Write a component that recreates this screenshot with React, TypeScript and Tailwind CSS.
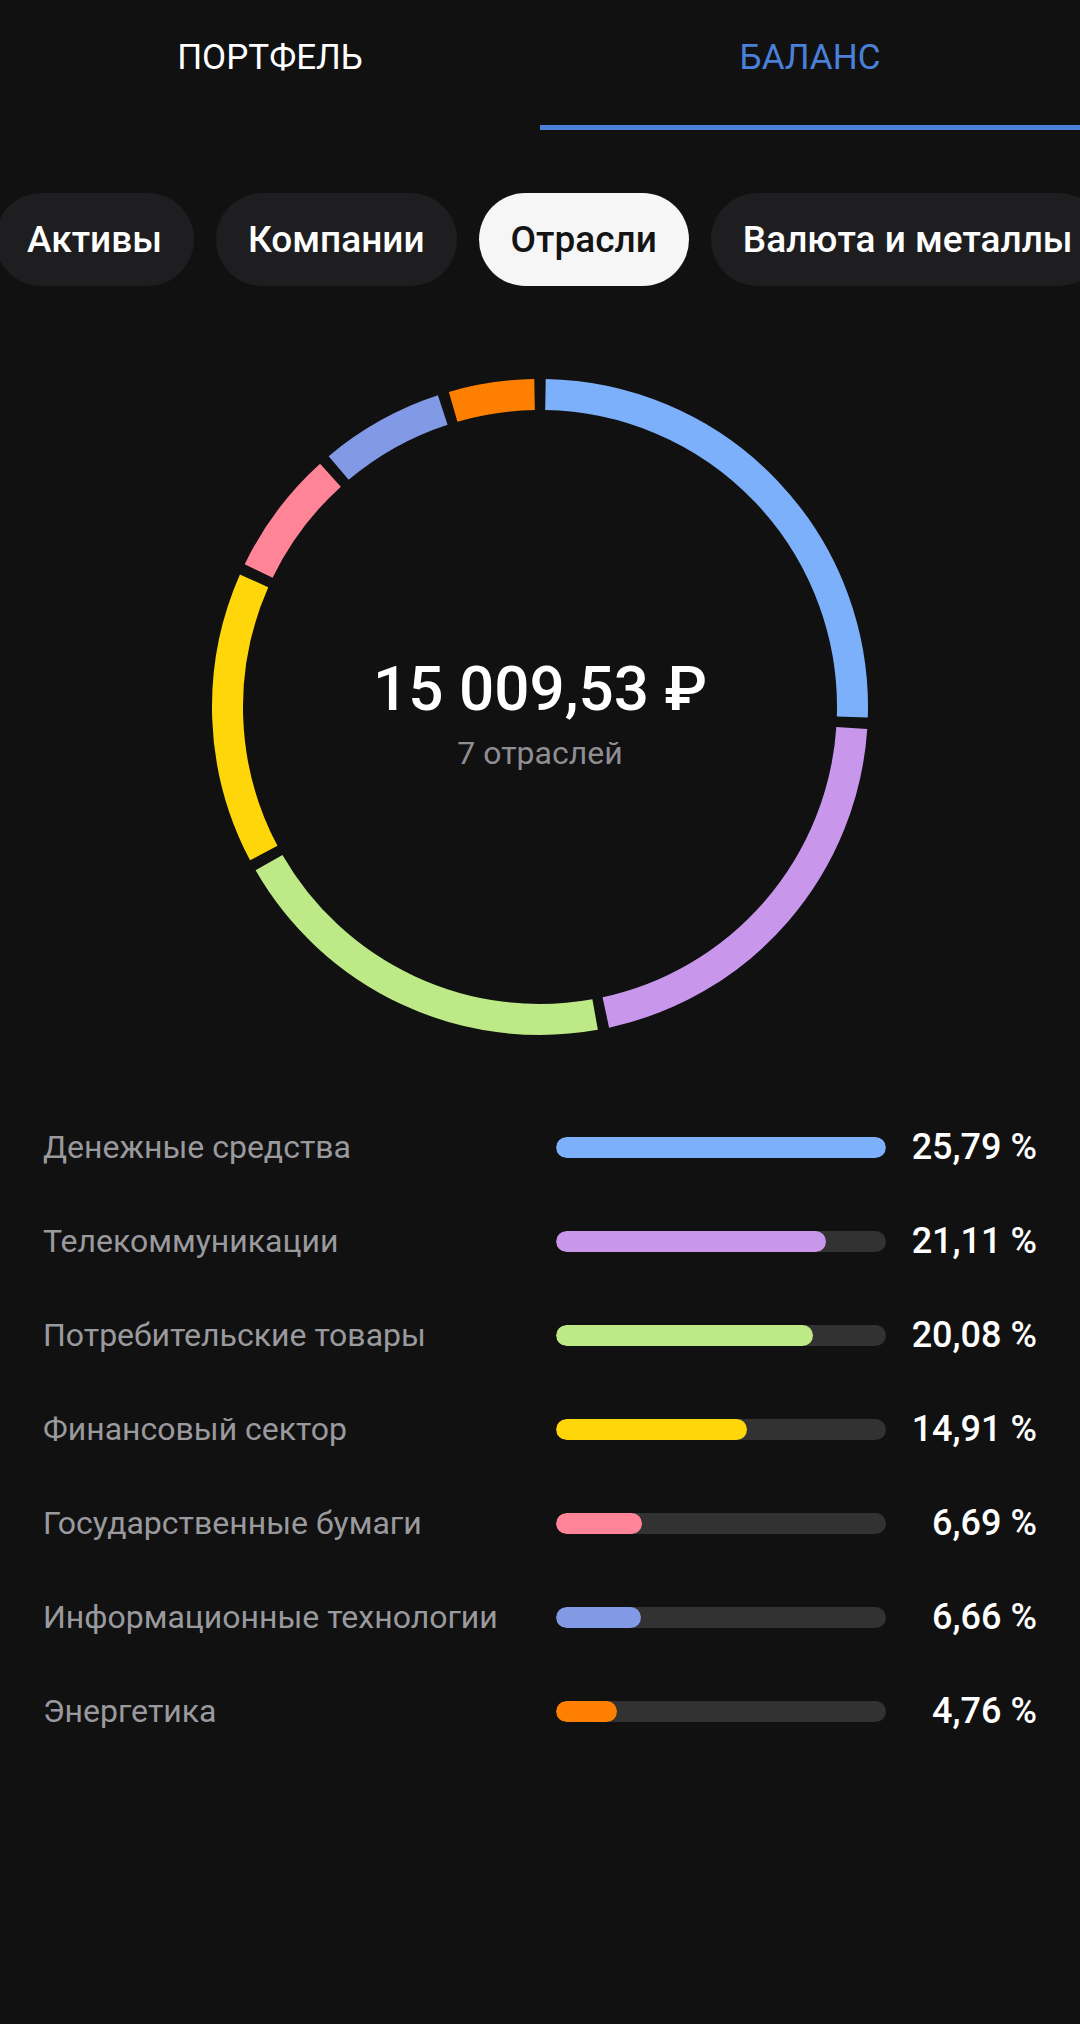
import React from 'react';

const sectors = [
  { name: 'Денежные средства', value: 25.79, color: '#7cb0fa' },
  { name: 'Телекоммуникации', value: 21.11, color: '#c897ec' },
  { name: 'Потребительские товары', value: 20.08, color: '#bde986' },
  { name: 'Финансовый сектор', value: 14.91, color: '#ffd60a' },
  { name: 'Государственные бумаги', value: 6.69, color: '#ff8497' },
  { name: 'Информационные технологии', value: 6.66, color: '#8299e5' },
  { name: 'Энергетика', value: 4.76, color: '#ff8000' },
];

const chips = ['Активы', 'Компании', 'Отрасли', 'Валюта и металлы'];

function polar(cx: number, cy: number, r: number, deg: number) {
  const a = (deg * Math.PI) / 180;
  return [cx + r * Math.sin(a), cy - r * Math.cos(a)];
}

function arcPath(cx: number, cy: number, r: number, start: number, end: number) {
  const [x1, y1] = polar(cx, cy, r, start);
  const [x2, y2] = polar(cx, cy, r, end);
  const large = end - start > 180 ? 1 : 0;
  return `M ${x1} ${y1} A ${r} ${r} 0 ${large} 1 ${x2} ${y2}`;
}

function Donut() {
  const size = 660;
  const c = size / 2;
  const r = 312.5;
  const gap = 2;
  let acc = 0;
  return (
    <svg width={size} height={size} viewBox={`0 0 ${size} ${size}`}>
      {sectors.map((s) => {
        const start = (acc / 100) * 360 + gap / 2;
        acc += s.value;
        const end = (acc / 100) * 360 - gap / 2;
        return (
          <path
            key={s.name}
            d={arcPath(c, c, r, start, end)}
            fill="none"
            stroke={s.color}
            strokeWidth={31}
            strokeLinecap="butt"
          />
        );
      })}
    </svg>
  );
}

export default function App() {
  const max = Math.max(...sectors.map((s) => s.value));

  return (
    <div className="min-h-screen bg-[#111111] font-['Roboto',sans-serif] text-white overflow-hidden">
      {/* top tabs */}
      <div className="flex">
        <div className="flex-1 flex flex-col">
          <div className="h-[125px] pb-[10px] flex items-center justify-center text-[35px] leading-none text-white">
            ПОРТФЕЛЬ
          </div>
          <div className="h-[5px]" />
        </div>
        <div className="flex-1 flex flex-col">
          <div className="h-[125px] pb-[10px] flex items-center justify-center text-[35px] leading-none text-[#4a80d9]">
            БАЛАНС
          </div>
          <div className="h-[5px] bg-[#4a80d9]" />
        </div>
      </div>

      {/* filter chips */}
      <div className="mt-[63px] flex gap-[22px] ml-[-5px] whitespace-nowrap">
        {chips.map((c) => (
          <div
            key={c}
            className={
              c === 'Отрасли'
                ? 'shrink-0 h-[93px] px-[32px] flex items-center rounded-full bg-[#f6f6f6] text-[#141414] text-[37px] font-medium'
                : 'shrink-0 h-[93px] px-[32px] flex items-center rounded-full bg-[#1e1e20] text-white text-[37px] font-medium'
            }
          >
            {c}
          </div>
        ))}
      </div>

      {/* donut chart */}
      <div className="mt-[91px] flex justify-center">
        <div className="relative w-[660px] h-[660px]">
          <Donut />
          <div className="absolute inset-0 flex flex-col items-center justify-center pt-[12px]">
            <div className="text-[62px] leading-none font-medium">15 009,53 ₽</div>
            <div className="mt-[17px] text-[32px] leading-none text-[#8e8e93]">7 отраслей</div>
          </div>
        </div>
      </div>

      {/* sector list */}
      <div className="mt-[63px] px-[43px] flex flex-col">
        {sectors.map((s) => (
          <div key={s.name} className="h-[94px] flex items-center">
            <div className="flex-1 text-[32px] text-[#9a9a9e] whitespace-nowrap">{s.name}</div>
            <div className="w-[330px] h-[21px] rounded-full bg-[#323232] overflow-hidden">
              <div
                className="h-full rounded-full"
                style={{ width: `${(s.value / max) * 100}%`, backgroundColor: s.color }}
              />
            </div>
            <div className="w-[151px] text-right text-[36px] font-medium">
              {s.value.toFixed(2).replace('.', ',')} %
            </div>
          </div>
        ))}
      </div>
    </div>
  );
}
